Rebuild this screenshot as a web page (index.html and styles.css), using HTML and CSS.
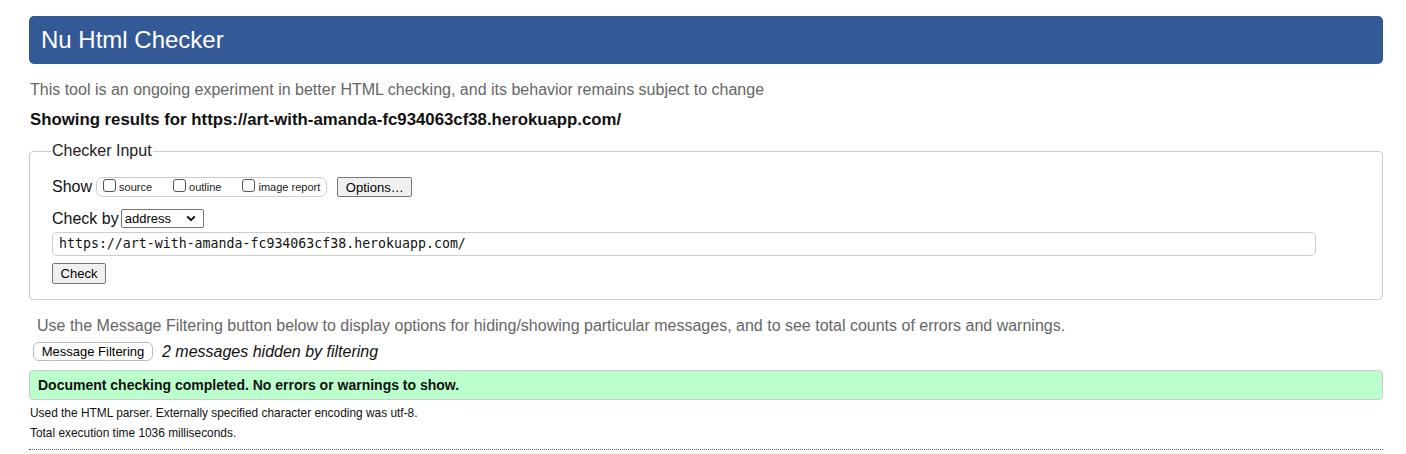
FILE: index.html
```html
<!DOCTYPE html>
<html>
<head>
<meta charset="utf-8">
<title>Nu Html Checker</title>
<link rel="stylesheet" href="styles.css">
</head>
<body>
<div class="page">
  <h1 class="title">Nu Html Checker</h1>
  <p class="intro">This tool is an ongoing experiment in better HTML checking, and its behavior remains subject to change</p>
  <p class="showing">Showing results for https://art-with-amanda-fc934063cf38.herokuapp.com/</p>
  <fieldset class="checker">
    <legend class="legend">Checker Input</legend>
    <div class="row show-row">
      <span class="label">Show</span>
      <span class="opts">
        <label class="opt"><span class="cb"></span>source</label>
        <label class="opt"><span class="cb"></span>outline</label>
        <label class="opt"><span class="cb"></span>image report</label>
      </span>
      <span class="btn options">Options…</span>
    </div>
    <div class="row checkby-row">
      <span class="label">Check by</span>
      <span class="select">address<svg class="chev" width="10" height="7" viewBox="0 0 10 7"><path d="M1.2 1.4 L5 5.2 L8.8 1.4" fill="none" stroke="#111" stroke-width="2"/></svg></span>
    </div>
    <div class="url">https://art-with-amanda-fc934063cf38.herokuapp.com/</div>
    <div class="row"><span class="btn check">Check</span></div>
  </fieldset>
  <p class="filter-note">Use the Message Filtering button below to display options for hiding/showing particular messages, and to see total counts of errors and warnings.</p>
  <div class="row filter-row">
    <span class="btn pill">Message Filtering</span>
    <em class="hidden-count">2 messages hidden by filtering</em>
  </div>
  <div class="success">Document checking completed. No errors or warnings to show.</div>
  <p class="details">Used the HTML parser. Externally specified character encoding was utf-8.</p>
  <p class="details">Total execution time 1036 milliseconds.</p>
  <hr class="rule">
</div>
</body>
</html>
```

FILE: styles.css
```css
html, body {
  margin: 0;
  padding: 0;
  background: #fff;
}
body {
  font-family: "Liberation Sans", Arial, Helvetica, sans-serif;
  color: #000;
}
.page {
  padding: 16px 23px 0 29px;
  display: flex;
  flex-direction: column;
}
.title {
  margin: 0;
  height: 48px;
  line-height: 48px;
  padding-left: 12px;
  background: #335a96;
  color: #fff;
  font-size: 24px;
  font-weight: normal;
  border-radius: 5px;
}
.intro {
  margin: 17px 0 0 1px;
  font-size: 16px;
  line-height: 18px;
  color: #666;
}
.showing {
  margin: 12px 0 0 1px;
  font-size: 16.8px;
  line-height: 18px;
  font-weight: bold;
  color: #111;
}
.checker {
  margin: 13px 0 0 0;
  padding: 8px 22px 15px 22px;
  border: 1px solid #ccc;
  border-radius: 4px;
  display: flex;
  flex-direction: column;
  min-width: 0;
}
.legend {
  padding: 0 1px;
  font-size: 16px;
  line-height: 18px;
  color: #222;
  margin-left: -1px;
}
.row {
  display: flex;
  align-items: center;
}
.label {
  font-size: 16px;
  line-height: 18px;
  color: #111;
}
.show-row {
  margin-top: 9px;
}
.opts {
  margin-left: 4px;
  height: 18px;
  border: 1px solid #ccc;
  border-radius: 7px;
  display: flex;
  align-items: center;
  padding: 0 6px 0 6px;
  gap: 21px;
}
.opt {
  display: flex;
  align-items: center;
  font-size: 11px;
  color: #222;
}
.cb {
  width: 11px;
  height: 11px;
  border: 1px solid #555;
  border-radius: 3px;
  margin-right: 3px;
  margin-top: -3px;
  background: #fff;
}
.btn {
  display: inline-flex;
  align-items: center;
  justify-content: center;
  box-sizing: border-box;
  font-size: 13px;
  color: #000;
  background: #f0f0f0;
  border: 1px solid #767676;
  border-radius: 2px;
}
.options {
  margin-left: 10px;
  height: 20px;
  width: 75px;
}
.checkby-row {
  margin-top: 12px;
}
.select {
  margin-left: 2px;
  box-sizing: border-box;
  width: 83px;
  height: 19px;
  border: 1px solid #767676;
  border-radius: 2px;
  font-size: 13px;
  display: flex;
  align-items: center;
  justify-content: space-between;
  padding: 0 7px 0 3px;
  background: #fff;
}
.url {
  margin-top: 4px;
  width: 1264px;
  box-sizing: border-box;
  height: 24px;
  border: 1px solid #ccc;
  border-radius: 5px;
  font-family: "DejaVu Sans Mono", "Liberation Mono", monospace;
  font-size: 13.25px;
  line-height: 22px;
  padding-left: 6px;
  color: #111;
}
.check {
  margin-top: 7px;
  width: 54px;
  height: 21px;
}
.filter-note {
  margin: 17px 0 0 8px;
  font-size: 16px;
  line-height: 18px;
  color: #666;
}
.filter-row {
  margin-top: 7px;
}
.pill {
  margin-left: 4px;
  height: 19px;
  width: 120px;
  border: 1px solid #bbb;
  border-radius: 6px;
  background: #fff;
}
.hidden-count {
  margin-left: 9px;
  font-size: 16px;
  color: #111;
}
.success {
  margin-top: 9px;
  height: 30px;
  box-sizing: border-box;
  background: #bbffcc;
  border: 1px solid #ccc;
  border-radius: 4px;
  font-size: 14px;
  font-weight: bold;
  line-height: 28px;
  padding-left: 8px;
  color: #111;
}
.details {
  margin: 6px 0 0 1px;
  font-size: 11.9px;
  line-height: 15px;
  color: #111;
}
.details + .details {
  margin-top: 5px;
}
.rule {
  margin: 8px 0 0 0;
  border: 0;
  border-top: 1px dotted #555;
  height: 0;
}
```
